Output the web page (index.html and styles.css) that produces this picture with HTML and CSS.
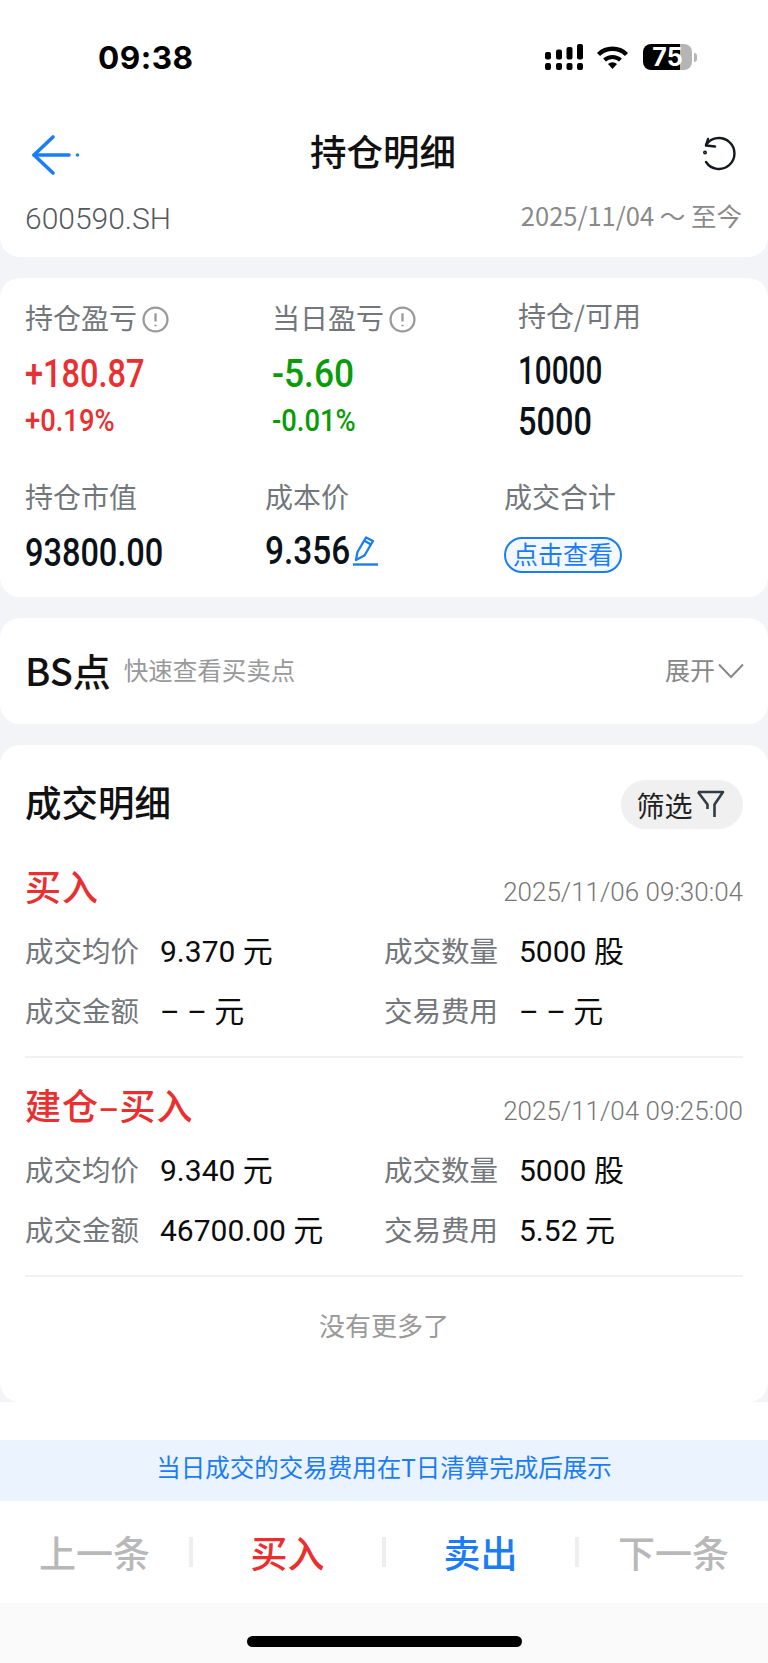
FILE: index.html
```html
<!DOCTYPE html>

<html lang="zh-CN">
    <head>
        <title>持仓明细</title>
        <meta charset="utf-8">
        <link rel="stylesheet" href="styles.css">
    </head>

    <body>
        <div class="page">
            <header class="top card-bottom">
                <div class="status">
                    <span class="clock">09:38</span>
                    <div class="status-icons">
                        <svg class="signal" width="38" height="26" viewBox="0 0 38 26" fill="#000">
                            <rect x="0" y="8" width="6" height="7.5" rx="2"/>
                            <rect x="11" y="5.5" width="6" height="10" rx="2"/>
                            <rect x="21.5" y="3" width="6" height="12.5" rx="2"/>
                            <rect x="32" y="0" width="6" height="15.5" rx="2"/>
                            <rect x="0" y="19" width="6" height="7" rx="2"/>
                            <rect x="11" y="19" width="6" height="7" rx="2"/>
                            <rect x="21.5" y="19" width="6" height="7" rx="2"/>
                            <rect x="32" y="19" width="6" height="7" rx="2"/>
                        </svg>
                        <svg class="wifi" width="33" height="24" viewBox="0 0 33 24" fill="none" stroke="#000">
                            <path d="M2.5 9.5A20 20 0 0 1 30.5 9.5" stroke-width="4.4"/>
                            <path d="M8.5 15A12 12 0 0 1 24.5 15" stroke-width="4"/>
                            <path d="M12 19A6.5 6.5 0 0 1 21 19L16.5 24Z" fill="#000" stroke="none"/>
                        </svg>
                        <div class="battery">75</div>
                        <div class="battery-tip"></div>
                    </div>
                </div>

                <nav class="nav">
                    <svg width="60" height="50" viewBox="0 0 60 50" fill="none" stroke="#1a7cf7" stroke-width="3.6" stroke-linecap="round" stroke-linejoin="round">
                        <path d="M28 7L9 25L28 43"/>
                        <path d="M9 25H44"/>
                        <circle cx="52.5" cy="25" r="1" stroke-width="1.6"/>
                    </svg>
                    <h1 class="nav-title">持仓明细</h1>
                    <svg width="50" height="50" viewBox="0 0 50 50" fill="none" stroke="#14181f" stroke-width="2.4" stroke-linecap="round" stroke-linejoin="round">
                        <path d="M11 15A15.5 15.5 0 1 1 11 32"/>
                        <path d="M13 9L11 15.5L20 16.5"/>
                        <circle cx="10" cy="22.5" r="0.8"/>
                    </svg>
                </nav>

                <div class="sub-row">
                    <span class="code">600590.SH</span>
                    <span class="range">2025/11/04 ～ 至今</span>
                </div>
            </header>

            <section class="card stats">
                <div class="stat-row first">
                    <div class="stat">
                        <div class="label">持仓盈亏<svg class="info" width="27" height="27" viewBox="0 0 26 26" fill="none" stroke="#999" stroke-width="2.2"><circle cx="13" cy="13" r="11.5"/><path d="M13 7V15M13 18V19.5"/></svg></div>
                        <div class="num big red">+180.87</div>
                        <div class="num small red">+0.19%</div>
                    </div>
                    <div class="stat">
                        <div class="label">当日盈亏<svg class="info" width="27" height="27" viewBox="0 0 26 26" fill="none" stroke="#999" stroke-width="2.2"><circle cx="13" cy="13" r="11.5"/><path d="M13 7V15M13 18V19.5"/></svg></div>
                        <div class="num big green loose">-5.60</div>
                        <div class="num small green">-0.01%</div>
                    </div>
                    <div class="stat">
                        <div class="label">持仓/可用</div>
                        <div class="num big dark tight">10000</div>
                        <div class="num big dark">5000</div>
                    </div>
                </div>
                <div class="stat-row second">
                    <div class="stat">
                        <div class="label">持仓市值</div>
                        <div class="num big dark">93800.00</div>
                    </div>
                    <div class="stat">
                        <div class="label">成本价</div>
                        <div class="cost">
                            <span class="num big dark price">9.356</span>
                            <svg width="26" height="34" viewBox="0 0 26 34" fill="none" stroke="#1a7cf7" stroke-width="2.3" stroke-linejoin="round"><path d="M3 26L4.5 18L13 3.5L20 7L11.5 21.5Z"/><path d="M11 6.5L18 10.5"/><path d="M0 30.5H25" stroke-width="2.4"/></svg>
                        </div>
                    </div>
                    <div class="stat">
                        <div class="label">成交合计</div>
                        <div class="pill">点击查看</div>
                    </div>
                </div>
            </section>

            <section class="card bs">
                <div class="bs-left">
                    <span class="bs-title">BS点</span>
                    <span class="bs-hint">快速查看买卖点</span>
                </div>
                <div class="bs-right">
                    <span>展开</span>
                    <svg width="26" height="16" viewBox="0 0 26 16" fill="none" stroke="#888" stroke-width="2"><path d="M1 1.5L13 14L25 1.5"/></svg>
                </div>
            </section>

            <section class="card deals">
                <div class="deals-head">
                    <h2 class="deals-title">成交明细</h2>
                    <div class="chip">筛选<svg width="30" height="29" viewBox="0 0 30 29" fill="none" stroke="#333c45" stroke-width="2.6" stroke-linejoin="round"><path d="M2 2H27L18.5 14.5V27"/><path d="M2 2L11.5 14.5V19"/></svg></div>
                </div>

                <div class="deal">
                    <div class="deal-top">
                        <span class="deal-type">买入</span>
                        <span class="deal-time">2025/11/06 09:30:04</span>
                    </div>
                    <div class="deal-grid">
                        <div class="cell"><span class="key">成交均价</span><span class="val">9.370 元</span></div>
                        <div class="cell"><span class="key">成交数量</span><span class="val">5000 股</span></div>
                        <div class="cell"><span class="key">成交金额</span><span class="val">– – 元</span></div>
                        <div class="cell"><span class="key">交易费用</span><span class="val">– – 元</span></div>
                    </div>
                </div>

                <div class="deal">
                    <div class="deal-top">
                        <span class="deal-type">建仓–买入</span>
                        <span class="deal-time">2025/11/04 09:25:00</span>
                    </div>
                    <div class="deal-grid">
                        <div class="cell"><span class="key">成交均价</span><span class="val">9.340 元</span></div>
                        <div class="cell"><span class="key">成交数量</span><span class="val">5000 股</span></div>
                        <div class="cell"><span class="key">成交金额</span><span class="val">46700.00 元</span></div>
                        <div class="cell"><span class="key">交易费用</span><span class="val">5.52 元</span></div>
                    </div>
                </div>

                <p class="no-more">没有更多了</p>
            </section>

            <footer class="bottom">
                <div class="notice">当日成交的交易费用在T日清算完成后展示</div>
                <div class="actions">
                    <div class="action off">上一条</div>
                    <div class="action buy">买入</div>
                    <div class="action sell">卖出</div>
                    <div class="action off">下一条</div>
                </div>
                <div class="home-bar"><div class="home-pill"></div></div>
            </footer>
        </div>
    </body>
</html>
```

FILE: styles.css
```css
html, body {
    margin: 0;
    padding: 0;
    background: #f2f4f8;
}

body {
    font-family: "Noto Sans CJK SC", "Liberation Sans", sans-serif;
    color: #111;
}

h1, h2, p {
    margin: 0;
    font-weight: 500;
}

.page {
    width: 768px;
    height: 1663px;
    overflow: hidden;
    display: flex;
    flex-direction: column;
}

/* top bar */
.top {
    height: 257px;
    background: #fff;
    border-radius: 0 0 20px 20px;
}

.status {
    height: 114px;
    display: flex;
    justify-content: space-between;
    align-items: center;
}

.clock {
    margin-left: 98px;
    font-family: Inter, sans-serif;
    font-weight: 700;
    font-size: 31.5px;
    letter-spacing: 0.5px;
    color: #000;
}

.status-icons {
    display: flex;
    align-items: center;
    margin-right: 71px;
}

.wifi {
    margin-left: 13px;
}

.battery {
    width: 49px;
    height: 26px;
    margin-left: 14px;
    border-radius: 8px;
    background: linear-gradient(to right, #000 37px, #b5b5b5 37px);
    color: #fff;
    font-family: Inter, sans-serif;
    font-weight: 700;
    font-size: 25px;
    line-height: 26px;
    text-align: center;
}

.battery-tip {
    width: 3px;
    height: 9px;
    margin-left: 2px;
    border-radius: 0 3px 3px 0;
    background: #b5b5b5;
}

.nav {
    height: 82px;
    display: flex;
    justify-content: space-between;
    align-items: center;
    padding: 0 23px 0 25px;
}

.nav-title {
    font-size: 36.5px;
    line-height: 50px;
    color: #111;
    margin: 0 14px 8px 0;
}

.sub-row {
    height: 44px;
    display: flex;
    justify-content: space-between;
    align-items: center;
    padding: 0 26px 0 25px;
}

.code {
    font-family: Roboto, sans-serif;
    font-size: 30px;
    font-weight: 300;
    color: #555a60;
}

.range {
    font-size: 25.5px;
    line-height: 36px;
    color: #8a8a8a;
    margin-top: -6px;
}

/* cards */
.card {
    background: #fff;
    border-radius: 20px;
    margin-top: 21px;
}

.stats {
    height: 319px;
    padding: 22px 0 0 25px;
    box-sizing: border-box;
}

.stat-row {
    display: grid;
}

.stat-row.first {
    height: 181px;
    grid-template-columns: 247px 246px auto;
}

.stat-row.second {
    grid-template-columns: 240px 239px auto;
}

.label {
    display: flex;
    align-items: center;
    font-size: 28px;
    line-height: 30px;
    color: #73777c;
}

.info {
    margin: 6px 0 0 5px;
}

/* the reference digits are a condensed face, Roboto is squeezed to fit */
.num {
    font-family: Roboto, sans-serif;
    font-weight: 500;
    white-space: nowrap;
    transform: scaleX(0.855);
    transform-origin: left center;
}

.tight {
    transform: scaleX(0.78);
}

.loose {
    transform: scaleX(0.93);
}

.big {
    font-size: 38px;
    line-height: 48px;
    margin-top: 17px;
}

.big + .big {
    margin-top: 3px;
}

.second .big {
    margin-top: 18px;
}

.small {
    font-size: 32px;
    line-height: 36px;
    margin-top: 4px;
}

.red {
    color: #e92f2f;
}

.green {
    color: #0a9b0a;
}

.dark {
    color: #0c1118;
}

.cost {
    display: flex;
    align-items: center;
}

.second .price {
    display: block;
    width: 85px;
    margin-top: 16px;
    transform: scaleX(0.88);
}

.cost svg {
    margin: 16px 0 0 3px;
}

.pill {
    width: 118px;
    height: 36px;
    box-sizing: border-box;
    margin-top: 26px;
    border: 2px solid #1a7cf7;
    border-radius: 18px;
    background: #f3f8ff;
    color: #1a7cf7;
    font-size: 25px;
    line-height: 29px;
    text-align: center;
}

.bs {
    height: 106px;
    box-sizing: border-box;
    display: flex;
    justify-content: space-between;
    align-items: center;
    padding: 0 24px 4px 25px;
}

.bs-left, .bs-right {
    display: flex;
    align-items: center;
}

.bs-title {
    font-size: 38px;
    font-weight: 500;
}

.bs-hint {
    margin-left: 13px;
    font-size: 24.5px;
    color: #999;
}

.bs-right {
    font-size: 25px;
    color: #888;
}

.bs-right svg {
    margin: 4px 0 0 3px;
}

/* deals */
.deals {
    height: 657px;
    flex-shrink: 0;
    padding: 35px 25px 0 25px;
    box-sizing: border-box;
}

.deals-head {
    height: 49px;
    display: flex;
    justify-content: space-between;
    align-items: center;
    margin-bottom: 11px;
}

.deals-title {
    font-size: 36.5px;
    line-height: 50px;
    margin-bottom: 6px;
}

.chip {
    width: 122px;
    height: 49px;
    box-sizing: border-box;
    display: flex;
    justify-content: center;
    align-items: center;
    padding-right: 2px;
    border-radius: 25px;
    background: #f0f0f0;
    color: #222;
    font-size: 28px;
}

.chip svg {
    margin-left: 3px;
}

.deal {
    padding-top: 23px;
    padding-bottom: 17px;
    border-bottom: 2px solid #f1f1f1;
}

.deal + .deal {
    padding-top: 24px;
}

.deal-top {
    height: 44px;
    display: flex;
    justify-content: space-between;
    align-items: center;
    margin-bottom: 12px;
}

.deal-type {
    font-size: 36px;
    line-height: 44px;
    font-weight: 500;
    letter-spacing: 1px;
    color: #e92f2f;
}

.deal-time {
    font-family: Roboto, sans-serif;
    font-size: 26px;
    font-weight: 300;
    color: #777;
    padding-top: 14px;
}

.deal-grid {
    display: grid;
    grid-template-columns: 359px auto;
    grid-auto-rows: 60px;
}

.cell {
    display: flex;
    align-items: center;
}

.key {
    width: 135px;
    font-size: 28.5px;
    color: #73777c;
}

.val {
    font-family: Roboto, "Noto Sans CJK SC", sans-serif;
    font-size: 30px;
    color: #0c0c0c;
}

.no-more {
    margin-top: 30px;
    font-size: 26px;
    line-height: 36px;
    font-weight: 400;
    color: #999;
    text-align: center;
}

/* bottom */
.bottom {
    flex: 1;
    background: #fff;
    padding-top: 38px;
}

.notice {
    height: 61px;
    background: #ebf4fe;
    color: #1a7cf7;
    font-size: 24.5px;
    line-height: 54px;
    text-align: center;
}

.actions {
    height: 102px;
    display: flex;
    align-items: center;
}

.action {
    flex: 1;
    height: 30px;
    display: flex;
    justify-content: center;
    align-items: center;
    font-size: 37px;
    font-weight: 500;
    line-height: 24px;
    border-right: 4px solid #eee;
}

.action:last-child {
    border-right: none;
}

.off {
    color: #b8b8b8;
}

.buy {
    color: #e92f2f;
}

.sell {
    color: #1a7cf7;
}

.home-bar {
    height: 60px;
    display: flex;
    justify-content: center;
    background: #fafafa;
}

.home-pill {
    width: 275px;
    height: 11px;
    margin-top: 33px;
    border-radius: 6px;
    background: #000;
}
```
